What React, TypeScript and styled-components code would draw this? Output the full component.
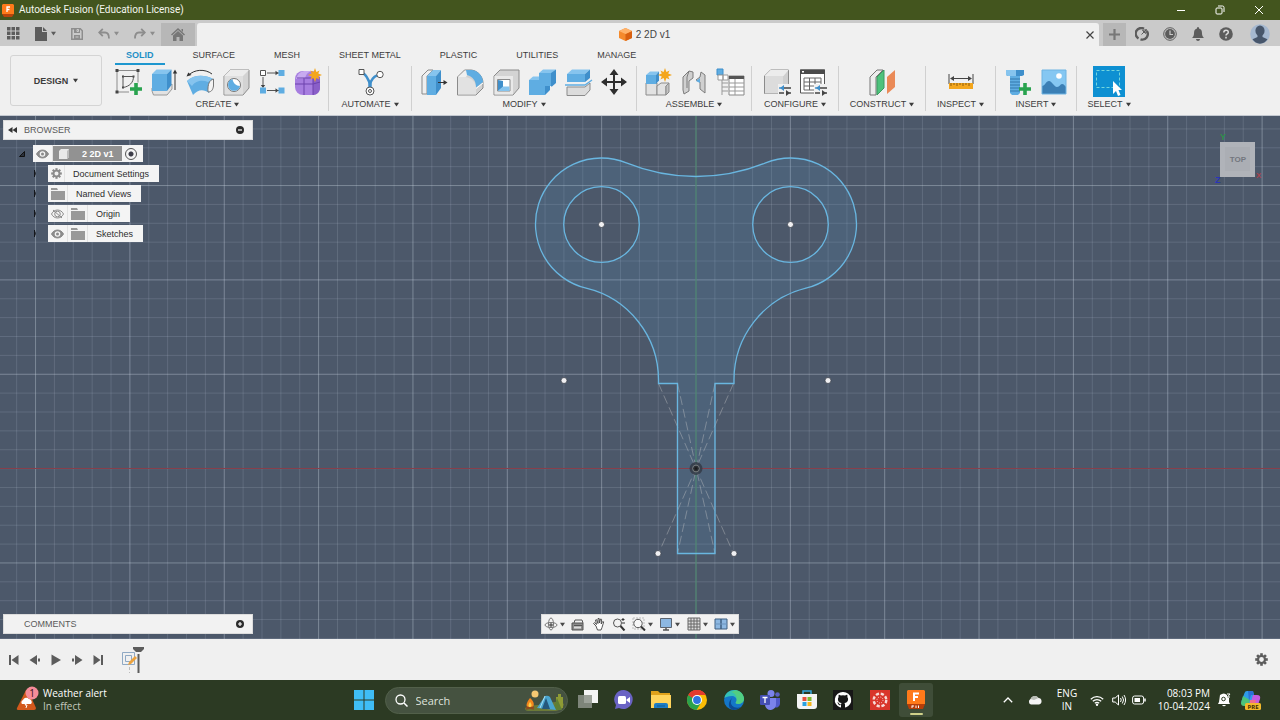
import React from "react";
import styled, { createGlobalStyle } from "styled-components";

const UI = '"Liberation Sans", Arial, sans-serif';
const SYS = '"Open Sans", "Noto Sans", sans-serif';

const Global = createGlobalStyle`
  *, *::before, *::after { box-sizing: border-box; }
  body { margin: 0; font-family: ${UI}; font-size: 9px; color: #3c3c3c; background: #f0f0f0; }
  button { font: inherit; color: inherit; border: 0; padding: 0; background: none; cursor: pointer; }
  svg { display: block; flex: none; }
`;

const Page = styled.div`
  display: flex;
  flex-direction: column;
  min-height: 100vh;
`;

/* ---------- window title bar ---------- */

const TitleBar = styled.header`
  display: flex;
  align-items: center;
  justify-content: space-between;
  height: 20px;
  padding: 0 2px;
  background: #43551e;
  color: #f4f6ee;
  font-family: Roboto, sans-serif;
`;

const TitleText = styled.div`
  display: flex;
  align-items: center;
  gap: 5px;
  font-size: 10px;
  line-height: 20px;
`;

const WindowButtons = styled.div`
  display: flex;
`;

const WindowButton = styled.button`
  display: flex;
  align-items: center;
  justify-content: center;
  width: 39px;
  height: 20px;
`;

/* ---------- document bar ---------- */

const DocBar = styled.div`
  display: flex;
  align-items: stretch;
  height: 26px;
  padding-top: 3px;
  background: #cacaca;
  color: #5c5c5c;
`;

const QuickTools = styled.div`
  display: flex;
  align-items: center;
  justify-content: space-between;
  width: 161px;
  padding: 0 6px 2px 7px;
`;

const QuickButton = styled.button<{ $dim?: boolean }>`
  display: flex;
  align-items: center;
  gap: 4px;
  height: 20px;
  color: ${(p) => (p.$dim ? "#8d8d8d" : "#5c5c5c")};
`;

const HomeTab = styled.button`
  display: flex;
  align-items: center;
  justify-content: center;
  width: 34px;
  margin-right: 2px;
  background: #b7b7b7;
  color: #777;
`;

const DocTab = styled.div`
  display: flex;
  flex: 1;
  align-items: center;
  padding: 0 3px 0 8px;
  border-radius: 3px 3px 0 0;
  background: #f0f0f0;
  color: #444;
`;

const DocName = styled.div`
  display: flex;
  flex: 1;
  align-items: center;
  justify-content: center;
  gap: 4px;
  font-size: 10px;
`;

const TabButton = styled.button`
  display: flex;
  align-items: center;
  justify-content: center;
  width: 12px;
  height: 18px;
`;

const NewTab = styled.button`
  display: flex;
  align-items: center;
  justify-content: center;
  width: 23px;
  margin-left: 4px;
  background: #b7b7b7;
  color: #777;
`;

const AccountTools = styled.div`
  display: flex;
  align-items: center;
  gap: 8px;
  padding: 0 10px 2px 6px;
`;

const RoundButton = styled.button<{ $apart?: boolean }>`
  display: flex;
  align-items: center;
  justify-content: center;
  width: 20px;
  height: 20px;
  margin-left: ${(p) => (p.$apart ? "6px" : "0")};
`;

/* ---------- ribbon ---------- */

const Ribbon = styled.div`
  display: flex;
  align-items: flex-start;
  height: 70px;
  padding-left: 10px;
  background: #f0f0f0;
  border-bottom: 1px solid #c3c8d0;
`;

const WorkspaceButton = styled.button`
  display: flex;
  align-items: center;
  justify-content: center;
  gap: 5px;
  width: 92px;
  height: 51px;
  margin: 9px 5px 0 0;
  border: 1px solid #d4d4d4;
  border-radius: 3px;
  font-weight: bold;
`;

const RibbonMain = styled.div`
  display: flex;
  flex-direction: column;
`;

const RibbonTabs = styled.nav`
  display: flex;
  gap: 17px;
  height: 20px;
  padding-left: 8px;
`;

const RibbonTab = styled.button<{ $active?: boolean }>`
  height: 19px;
  padding: 2px 11px 0;
  border-bottom: 2px solid ${(p) => (p.$active ? "#1e97cf" : "transparent")};
  color: ${(p) => (p.$active ? "#1e8fc6" : "#3c3c3c")};
  font-weight: ${(p) => (p.$active ? "bold" : "normal")};
  line-height: 15px;
`;

const Groups = styled.div`
  display: flex;
`;

const Group = styled.section<{ $width: number; $last: boolean }>`
  display: flex;
  flex-direction: column;
  align-items: center;
  width: ${(p) => p.$width}px;
  height: 45px;
  border-right: 1px solid ${(p) => (p.$last ? "transparent" : "#d0d0d0")};
`;

const ToolRow = styled.div`
  display: flex;
  height: 32px;
`;

const ToolButton = styled.button<{ $active?: boolean }>`
  display: flex;
  align-items: center;
  justify-content: center;
  width: ${(p) => (p.$active ? "32px" : "36px")};
  height: 31px;
  background: ${(p) => (p.$active ? "#0e90d2" : "transparent")};
`;

const GroupLabel = styled.button`
  display: flex;
  align-items: center;
  gap: 3px;
  height: 15px;
`;

/* ---------- canvas ---------- */

const Canvas = styled.main`
  position: relative;
  display: flex;
  flex: 1;
  flex-direction: column;
  justify-content: space-between;
  min-height: 400px;
  background: #4c586a;
  overflow: hidden;
`;

const Drawing = styled.svg`
  position: absolute;
  inset: 0;
  width: 100%;
  height: 100%;
`;

const CanvasTop = styled.div`
  position: relative;
  display: flex;
  justify-content: space-between;
  align-items: flex-start;
  padding: 4px 14px 0 3px;
`;

const CanvasBottom = styled.div`
  position: relative;
  display: grid;
  grid-template-columns: 1fr auto 1fr;
  padding: 0 3px 5px;
`;

const PanelBar = styled.div`
  display: flex;
  align-items: center;
  width: 250px;
  height: 20px;
  padding: 0 6px 0 4px;
  background: #f2f2f2;
  border: 1px solid #dcdcdc;
  color: #5a5a5a;
`;

const PanelTitle = styled.span`
  flex: 1;
  padding-left: 6px;
`;

const PanelLead = styled.span`
  width: 10px;
`;

const Tree = styled.ul`
  display: flex;
  flex-direction: column;
  gap: 3px;
  margin: 5px 0 0;
  padding: 0;
  list-style: none;
`;

const TreeRow = styled.li<{ $depth: number }>`
  display: flex;
  height: 17px;
  padding-left: ${(p) => 12 + p.$depth * 15}px;
  color: #2c2c2c;
`;

const Expander = styled.button`
  display: flex;
  align-items: center;
  width: 18px;
  padding-left: 4px;
`;

const RowBody = styled.div`
  display: flex;
  align-items: stretch;
  background: #f4f4f4;
`;

const RowCell = styled.span<{ $wide?: boolean }>`
  display: flex;
  align-items: center;
  justify-content: center;
  width: ${(p) => (p.$wide ? "20px" : "17px")};
  border-right: 1px solid #e2e2e2;
  color: #8b8b8b;
`;

const RowLabel = styled.span`
  display: flex;
  align-items: center;
  padding: 0 10px 0 8px;
`;

const RootLabel = styled.span`
  display: flex;
  align-items: center;
  gap: 12px;
  width: 69px;
  margin: 1px 0;
  padding-left: 5px;
  background: #929292;
  color: #fff;
  font-weight: bold;
`;

const ActiveRadio = styled.input`
  appearance: none;
  width: 12px;
  height: 12px;
  margin: auto 6px auto 3px;
  border: 1px solid #555;
  border-radius: 50%;
  background: radial-gradient(circle, #3c3c48 0 2px, #f4f4f4 3px);
`;

const NavBar = styled.div`
  display: flex;
  align-items: center;
  justify-content: space-between;
  width: 198px;
  height: 20px;
  padding: 0 3px 0 2px;
  background: #f2f2f2;
  border: 1px solid #dcdcdc;
`;

const NavButton = styled.button`
  display: flex;
  align-items: center;
  gap: 2px;
  color: #4a4a4a;
`;

/* ---------- timeline ---------- */

const Timeline = styled.div`
  display: flex;
  align-items: center;
  height: 41px;
  padding: 0 8px 0 3px;
  background: #f0f0f0;
  color: #5c5c5c;
`;

const Playback = styled.div`
  display: flex;
  margin-right: 12px;
`;

const PlayButton = styled.button`
  display: flex;
  align-items: center;
  justify-content: center;
  width: 21px;
  height: 20px;
`;

const TimelineTrack = styled.div`
  flex: 1;
`;

/* ---------- taskbar ---------- */

const Taskbar = styled.footer`
  display: grid;
  grid-template-columns: 1fr auto 1fr;
  align-items: center;
  height: 40px;
  background: #2c3a23;
  color: #fff;
  font-family: ${SYS};
  font-size: 10px;
`;

const Weather = styled.button`
  display: flex;
  align-items: center;
  justify-self: start;
  gap: 4px;
  padding-left: 16px;
  text-align: left;
  line-height: 13px;
`;

const WeatherDetail = styled.div`
  color: #c3c9bd;
`;

const TaskCenter = styled.div`
  display: flex;
  align-items: center;
`;

const SearchBox = styled.label`
  display: flex;
  align-items: center;
  gap: 8px;
  width: 183px;
  height: 27px;
  margin: 0 3px 0 4px;
  padding: 0 1px 0 9px;
  border: 1px solid #52604a;
  border-radius: 14px;
  background: #455240;
  overflow: hidden;
`;

const SearchInput = styled.input`
  flex: 1;
  min-width: 0;
  padding: 0;
  border: 0;
  outline: 0;
  background: none;
  color: #fff;
  font-family: ${SYS};
  font-size: 11px;
  &::placeholder { color: #dfe3dc; opacity: 1; }
`;

const AppList = styled.div`
  display: flex;
  justify-content: space-between;
  width: 363px;
`;

const AppButton = styled.button<{ $active?: boolean }>`
  display: flex;
  align-items: center;
  justify-content: center;
  width: 34px;
  height: 34px;
  border-radius: 3px;
  background: ${(p) => (p.$active ? "#3f4d38" : "transparent")};
`;

const Tray = styled.div`
  display: flex;
  align-items: center;
  justify-self: end;
  padding-right: 16px;
`;

const TrayButton = styled.button<{ $width: number }>`
  display: flex;
  align-items: center;
  justify-content: center;
  width: ${(p) => p.$width}px;
  height: 34px;
`;

const TrayText = styled.button<{ $width: number; $align: string }>`
  width: ${(p) => p.$width}px;
  text-align: ${(p) => p.$align};
  line-height: 13px;
`;

/* ---------- icons ---------- */

type IconProps = { w?: number; h?: number; box?: string; children: React.ReactNode };

const Icon = ({ w = 30, h = w, box, children }: IconProps) => (
  <svg width={w} height={h} viewBox={box ?? `0 0 ${w} ${h}`} fill="none" aria-hidden="true">
    {children}
  </svg>
);

const Caret = () => (
  <Icon w={5} h={5}>
    <path d="M0 .8h5L2.5 4.6z" fill="currentColor" />
  </Icon>
);

const BLUE = "#5fade2";
const SKY = "#86c4ee";
const DEEP = "#3f8fcb";
const EDGE = "#8b8b8b";

const GreenPlus = ({ x, y }: { x: number; y: number }) => (
  <path d={`M${x - 6} ${y}h12M${x} ${y - 6}v12`} stroke="#2aa34f" strokeWidth="3.6" />
);

const Star = ({ x, y }: { x: number; y: number }) => (
  <path
    transform={`translate(${x} ${y})`}
    d="M0-7 1.4-3 4.6-4.6 3.2-1.4 7 0 3.2 1.4 4.6 4.6 1.4 3 0 7-1.4 3-4.6 4.6-3.2 1.4-7 0-3.2-1.4-4.6-4.6-1.4-3z"
    fill="#f4a61c"
  />
);

const Adjust = ({ x, y }: { x: number; y: number }) => (
  <g transform={`translate(${x} ${y})`}>
    <rect x="-1" y="-4" width="14" height="12" fill="#f0f0f0" />
    <path d="M5 0h7M0 5h5" stroke="#444" strokeWidth="1.4" />
    <path d="M0 0h5" stroke={DEEP} strokeWidth="1.4" />
    <path d="M5-3v6L1 0z" fill={DEEP} />
    <path d="M7 2v6l4-3z" fill="#444" />
    <path d="M10 5h2" stroke="#444" strokeWidth="1.4" />
  </g>
);

const ribbonIcons: Record<string, React.ReactNode> = {
  "Create Sketch": (
    <>
      <path d="M4 3.500h21M4 3.500v21M25 3.500v12M4 25h12" stroke="#8c8c8c" />
      <path d="M2.500 2h3v3h-3zM23.500 2h3v3h-3zM2.500 23.500h3v3h-3zM9 8.500h2v2H9zM19.500 8.500h2v2h-2zM9 19.500h2v2H9z" fill="#444" />
      <path d="M10 20.500v-11h10.500c0 6-4 10-10.500 11z" stroke="#555" />
      <GreenPlus x={23} y={22} />
    </>
  ),
  Extrude: (
    <>
      <path d="M3 24v-3h15l5-4v5l-5 6H4.500z" fill="#e2e2e2" stroke="#999" />
      <path d="M3 7h15v17H3z" fill={BLUE} />
      <path d="M3 7l4.500-4.500h15L18 7z" fill={SKY} />
      <path d="M18 7l4.500-4.500V18L18 24z" fill={DEEP} />
      <path d="M26 23V5" stroke="#333" />
      <path d="M23.800 6.500 26 2.500l2.200 4z" fill="#333" />
    </>
  ),
  Revolve: (
    <>
      <path d="M4 8C9 2.500 20 1.500 27 7" stroke="#333" />
      <path d="M1.500 9.500l1.800-4L6.500 8z" fill="#333" />
      <path d="M2 14c6-6 17-7 26-2l-4 14c-5-4-11-4-16 2z" fill={BLUE} />
      <path d="M2 14c6-6 17-7 26-2l-5 3c-5-2-12-2-16 4z" fill={SKY} />
      <path d="M28.500 12c-4 1-6 5-5.500 13 4 0 5-3 5.500-6z" fill="#f4f4f4" stroke="#777" />
    </>
  ),
  Hole: (
    <>
      <path d="M3 9l6-6h19v18l-6 7H3z" fill="#d3d3d3" stroke={EDGE} strokeLinejoin="round" />
      <path d="M3 9l6-6h19l-6 6z" fill="#ececec" />
      <path d="M3.500 9H22v18.500H3.500z" fill="#dfdfdf" />
      <circle cx="13" cy="18" r="6.500" fill="#fff" stroke="#777" />
      <path d="M11.500 12a6 6 0 1 0 7.500 7c-4 0-7-3-7.500-7z" fill={BLUE} />
    </>
  ),
  "Rectangular Pattern": (
    <>
      <path d="M10 6h12M6 10v10M10 23.500h12" stroke="#555" />
      <path d="M18.500 3.800v4.400L21.500 6zM18.500 21.300v4.400l3-2.200zM3.800 18h4.400L6 21z" fill="#444" />
      <path d="M3.500 3.500h5v5h-5z" fill="#fff" stroke="#555" />
      <path d="M21.500 3h6v6h-6zM3 20.500h6v6H3zM21.500 20.500h6v6h-6z" fill={BLUE} />
    </>
  ),
  "Create Form": (
    <>
      <rect x="2" y="4" width="25" height="24" rx="8" fill="#a77ee0" />
      <path d="M3 12c2-6 5-8 10-8h6c-4 1-6 3-7 8z" fill="#c8abf0" />
      <path d="M20 12l7-2v11c0 4-3 7-7 7z" fill="#8a5fc8" />
      <path d="M2 17h18l7-2M11 11v17M4 11h16M20 11v17" stroke="#6c43ad" />
      <Star x={22} y={8} />
    </>
  ),
  Automate: (
    <>
      <path d="M7 6c5 1 6 8 8 10 2-2 2-7 9-8" stroke={DEEP} strokeWidth="2.600" />
      <path d="M15 14v8" stroke={DEEP} strokeWidth="3.500" />
      <path d="M4 2.500h5v5H4z" fill="#fff" stroke="#555" />
      <circle cx="25" cy="7.500" r="3.200" fill="#fff" stroke="#555" />
      <circle cx="15" cy="24" r="4" fill="#fff" stroke="#555" />
      <circle cx="15" cy="24" r="1.500" stroke="#555" />
    </>
  ),
  "Press Pull": (
    <>
      <path d="M3 9l6-6h5L8 9v18H3z" fill="#efefef" stroke={EDGE} />
      <path d="M8 9h9v19H8z" fill={BLUE} />
      <path d="M8 9l6-6h8l-5 6z" fill={SKY} />
      <path d="M17 9l5-6v18l-5 7z" fill={DEEP} />
      <path d="M19 15.500h7" stroke="#333" />
      <path d="M24.500 13v5l4-2.500z" fill="#333" />
    </>
  ),
  Fillet: (
    <>
      <path d="M2.500 10l7-7h7c7 1 11.500 7 11.500 13v5l-7 7H2.500z" fill="#d2d2d2" stroke={EDGE} />
      <path d="M3 10h7c7 1 11 5 11 11v6.500H3z" fill="#e2e2e2" />
      <path d="M3 10l7-6.500h5L11 10z" fill="#f0f0f0" />
      <path d="M11 3h6c7 1 11 7 11 12l-7 5.500c0-7-3-10.500-9-12.500z" fill={BLUE} />
      <path d="M21 21.500l7-5.500" stroke="#fff" />
    </>
  ),
  Shell: (
    <>
      <path d="M3 9l6-6h19v18l-6 7H3z" fill="#d3d3d3" stroke={EDGE} strokeLinejoin="round" />
      <path d="M3.500 9H22v18.500H3.500z" fill="#e9e9e9" />
      <path d="M6.500 12.500h12.500V24H6.500z" fill="#fff" stroke={EDGE} />
      <path d="M7 13l5 1v6l-5 4z" fill={DEEP} />
      <path d="M12 19.500h6.500V24H7z" fill={SKY} />
    </>
  ),
  Combine: (
    <>
      <path d="M2 13h10V6h12v13h-6v9H2z" fill={BLUE} />
      <path d="M2 13l4-3.500h6V13zM12 6l4-3.500h13L25 6z" fill={SKY} />
      <path d="M24 6l5-3.500V16l-4 3.500h-1zM18 28l5-5v-4h-5z" fill={DEEP} />
    </>
  ),
  "Split Body": (
    <>
      <path d="M4 20h18l5-4v7l-5 5.500H4z" fill="#dcdcdc" stroke={EDGE} />
      <path d="M4 7h18v8H4z" fill={BLUE} />
      <path d="M4 7l5-4.500h18L22 7z" fill={SKY} />
      <path d="M22 7l5-4.500V11l-5 4z" fill={DEEP} />
      <path d="M2 18h20l7-5" stroke={BLUE} strokeWidth="1.400" />
    </>
  ),
  Move: (
    <>
      <path d="M15 5v20M5 15h20" stroke="#2e2e2e" strokeWidth="2" />
      <path d="M15 2l4.500 6h-9zM15 28l-4.500-6h9zM2 15l6-4.500v9zM28 15l-6-4.500v9z" fill="#2e2e2e" />
    </>
  ),
  "New Component": (
    <>
      <path d="M3 16h11v12H3z" fill="#e2e2e2" stroke={EDGE} />
      <path d="M14 19l4-3h8l-3 3v9h-9z" fill="#e2e2e2" stroke={EDGE} />
      <path d="M23 19l3-3v9l-3 3z" fill="#c2c2c2" stroke={EDGE} />
      <path d="M3 8h10v9H3z" fill={BLUE} />
      <path d="M3 8l4-3.500h9L13 8z" fill={SKY} />
      <path d="M13 8l3-3.500v9L13 17z" fill={DEEP} />
      <Star x={22} y={8} />
    </>
  ),
  Joint: (
    <>
      <path d="M4 10l6-6 4 1v6l-4 3v10l-5 3-1-4z" fill="#d0d0d0" stroke="#7c7c7c" />
      <path d="M10 4l-2 6v11" stroke="#7c7c7c" />
      <path d="M17 13l4-3 1-5 4 3v18l-5-4v-7z" fill="#d0d0d0" stroke="#7c7c7c" />
      <path d="M17 14l4-3v5z" fill={BLUE} />
    </>
  ),
  "Parts List": (
    <>
      <path d="M2 2h6v6H2z" fill={BLUE} stroke={DEEP} />
      <path d="M7 13v15M7 16h6M7 20h6M7 24h6" stroke="#999" />
      <path d="M8 8h5v5H8zM3 8h5v5H3z" fill="#fff" stroke="#999" />
      <path d="M14 9h15v19H14z" fill="#fff" stroke="#888" />
      <path d="M14 9h15v3H14z" fill="#555" />
      <path d="M14 16h15M14 20h15M14 24h15M20 12v16" stroke="#999" />
    </>
  ),
  "Configure Design": (
    <>
      <path d="M2.500 9l6-6h18v18l-5 5.500h-19z" fill="#cfcfcf" stroke={EDGE} />
      <path d="M2.500 9l6-6h18l-5 6z" fill="#ececec" />
      <path d="M3 9h18v17.500H3z" fill="#dcdcdc" />
      <Adjust x={17} y={21} />
    </>
  ),
  "Configuration Table": (
    <>
      <path d="M2.500 3h24v23h-24z" fill="#fff" stroke="#555" />
      <path d="M2 2.500h25V7H2z" fill="#4b4b4b" />
      <path d="M4 4h2v1.500H4z" fill="#fff" />
      <path d="M6 11h17v12H6zM6 15h17M6 19h17M11.500 11v12M17 11v12" stroke="#666" />
      <Adjust x={17} y={21} />
    </>
  ),
  "Offset Plane": (
    <>
      <path d="M3 10l7-7h6L9 10v18H3z" fill="#ededed" stroke="#777" />
      <path d="M10 10l7-7v18l-7 7z" fill="#4ec27c" stroke="#3a9a60" />
      <path d="M20 10l8-7v17l-8 7z" fill="#ea8a57" />
    </>
  ),
  Measure: (
    <>
      <path d="M3 7v10M27 7v10M6 11.500h18" stroke="#444" />
      <path d="M8 9v5L4 11.500zM22 9v5l4-2.500z" fill="#444" />
      <path d="M3 16h24v6H3z" fill="#f4a61c" />
      <path d="M5 16v3M8 16v2M11 16v3M14 16v2M17 16v3M20 16v2M23 16v3" stroke="#8d5c08" />
    </>
  ),
  "Insert Fastener": (
    <>
      <path d="M7 9h10v17l-2 2H9l-2-2z" fill={BLUE} />
      <path d="M3 3h18v5l-2 1H5L3 8z" fill={DEEP} />
      <path d="M3 3h10v6H5L3 8z" fill={SKY} />
      <path d="M7 12h10M7 15h10M7 18h10M7 21h10M7 24h10" stroke="#3578ad" />
      <GreenPlus x={22} y={22} />
    </>
  ),
  Canvas: (
    <>
      <path d="M3 3h24v24H3z" fill="#85c7f2" />
      <path d="M3 19c3 0 4-5 7-5s5 6 8 6 3-3 5-3 3 2 4 3v7H3z" fill="#3b7fb5" />
      <circle cx="20" cy="9" r="2.800" fill="#fff" />
      <path d="M3 3h24v24H3z" stroke="#6fb4e2" />
    </>
  ),
  Select: (
    <>
      <path d="M2.500 3.500h23v17h-23z" stroke="#74d6dd" strokeDasharray="3 2" />
      <path d="M19 14v13l3-3 2 5 2.500-1-2-5H28z" fill="#fff" />
    </>
  ),
};

const groups = [
  { label: "CREATE", width: 222, tools: ["Create Sketch", "Extrude", "Revolve", "Hole", "Rectangular Pattern", "Create Form"] },
  { label: "AUTOMATE", width: 83, tools: ["Automate"] },
  { label: "MODIFY", width: 225, tools: ["Press Pull", "Fillet", "Shell", "Combine", "Split Body", "Move"] },
  { label: "ASSEMBLE", width: 115, tools: ["New Component", "Joint", "Parts List"] },
  { label: "CONFIGURE", width: 87, tools: ["Configure Design", "Configuration Table"] },
  { label: "CONSTRUCT", width: 87, tools: ["Offset Plane"] },
  { label: "INSPECT", width: 70, tools: ["Measure"] },
  { label: "INSERT", width: 81, tools: ["Insert Fastener", "Canvas"] },
  { label: "SELECT", width: 65, tools: ["Select"] },
];

const tabs = ["SOLID", "SURFACE", "MESH", "SHEET METAL", "PLASTIC", "UTILITIES", "MANAGE"];

const Gear = ({ size = 12 }: { size?: number }) => (
  <Icon w={size} box="-6 -6 12 12">
    {[0, 45, 90, 135].map((a) => (
      <path key={a} d="M0-5.800v11.600" stroke="currentColor" strokeWidth="2.400" transform={`rotate(${a})`} />
    ))}
    <circle r="3.200" stroke="currentColor" strokeWidth="2" fill="#f0f0f0" />
  </Icon>
);

const Eye = ({ off = false }: { off?: boolean }) => (
  <Icon w={13} h={10}>
    <path d="M.5 5C3-.3 10-.3 12.500 5 10 10.300 3 10.300.5 5z" stroke="currentColor" fill={off ? "none" : "currentColor"} />
    <circle cx="6.500" cy="5" r="2.800" fill={off ? "none" : "#f4f4f4"} stroke="currentColor" strokeWidth={off ? 1 : 0} />
    <circle cx="6.500" cy="5" r="1.500" fill={off ? "none" : "currentColor"} />
    {off && <path d="M2 1l9 8" stroke="currentColor" />}
  </Icon>
);

const Folder = () => (
  <Icon w={14} h={12}>
    <path d="M0 0h6l1 2H0zM0 3h14v9H0z" fill="#999" />
  </Icon>
);

/* ---------- sketch drawing ---------- */

const PITCH = 18.87;
const steps = Array.from({ length: 241 }, (_, i) => i - 120);

const profile =
  "M-69.600-305.100A184.600 184.600 0 0 0 69.600-305.100A66 66 0 1 1 109.900-179.800A94.400 94.400 0 0 0 38-87.500V-84.500H19V85.500H-18.500V-84.500H-37.500V-87.500A94.400 94.400 0 0 0-109.900-179.800A66 66 0 1 1-69.600-305.100Z";
const hole = (x: number) => `M${x - 37.8}-243.500a37.800 37.800 0 1 0 75.600 0a37.800 37.800 0 1 0-75.600 0Z`;

const SketchView = () => (
  <Drawing aria-label="Sketch of a winding key">
    <svg x="50%" overflow="visible">
      <g transform="translate(56 352)">
        {steps.map((i) => {
          const tone = i % 5 === 0 ? "rgba(205,215,230,.38)" : "rgba(200,212,228,.16)";
          return <path key={i} d={`M${i * PITCH}-2400V2400M-2400 ${i * PITCH + 0.6}H2400`} stroke={tone} />;
        })}
        <path d={profile + hole(-94.5) + hole(94.5)} fill="rgba(82,146,195,.17)" fillRule="evenodd" />
        <path d="M-2400 .5H2400" stroke="#873f4b" />
        <path d="M0-2400V2400" stroke="#3d7c5e" />
        <path d="M-37.500-84.500L37.500 85.500M37.500-84.500L-37.500 85.500M-18.500-84.500L19 85.500M19-84.500L-18.500 85.500" stroke="rgba(205,205,205,.38)" strokeDasharray="9 4" />
        <path d={profile + hole(-94.5) + hole(94.5)} fill="none" stroke="#69b6e0" strokeWidth="1.300" />
        <circle cx="0" cy=".5" r="6.500" fill="#343b46" opacity=".85" />
        <circle cx="0" cy=".5" r="3.400" fill="#2a2e34" stroke="#8c9292" strokeWidth=".8" />
        <circle cx="0" cy=".5" r="1.200" fill="#1b1b1b" />
        {[[-94.5, -243.5], [94.5, -243.5], [-132, -87.5], [132, -87.5], [-38, 85.5], [38, 85.5]].map(([x, y]) => (
          <circle key={`${x} ${y}`} cx={x} cy={y} r="3" fill="#f0f0f2" stroke="#3b414c" strokeWidth=".8" />
        ))}
      </g>
    </svg>
  </Drawing>
);

const ViewCube = () => (
  <svg width="54" height="68" viewBox="0 0 54 68" fontFamily='"Liberation Sans", sans-serif' fontWeight="bold" role="img" aria-label="View cube, top">
    <rect x="8" y="22" width="35" height="35" fill="#b0b3b9" />
    <rect x="13" y="27" width="25" height="24" fill="#abaeb4" />
    <text x="26" y="42" fontSize="8" fill="#73767e" textAnchor="middle">TOP</text>
    <text x="8" y="20" fontSize="9" fill="#2f8f4a">Y</text>
    <text x="3" y="63" fontSize="9" fill="#2a35b8">Z</text>
    <text x="44" y="58" fontSize="8" fill="#a8424c">X</text>
  </svg>
);

/* ---------- taskbar app pictures ---------- */

const apps: { name: string; icon: React.ReactNode; active?: boolean }[] = [
  { name: "Task view", icon: <><path d="M7 1h14v13H7z" fill="#f4f4f4" /><path d="M1 6h14v13H1z" fill="#8d938a" opacity=".85" /></> },
  { name: "Chat", icon: <><path d="M11 1a9.500 9.500 0 1 1-5 18l-4 1 1-4A9.500 9.500 0 0 1 11 1z" fill="#6a63c4" /><rect x="5" y="7" width="8" height="8" rx="1.500" fill="#fff" /><path d="M13.500 10.500l3.500-2.500v6l-3.500-2.500z" fill="#fff" /></> },
  { name: "File Explorer", icon: <><path d="M1 2h7l2 2h10v6H1z" fill="#e0a21b" /><path d="M1 6h20v13H1z" fill="#ffd45c" /><path d="M4 19v-3q0-2 2-2h10q2 0 2 2v3z" fill="#1d7cc4" /><path d="M7 17h8" stroke="#0d5a99" /></> },
  { name: "Chrome", icon: <><circle cx="11" cy="11" r="10" fill="#fbbc05" /><path d="M11 11L2.300 6A10 10 0 0 1 19.700 6H11z" fill="#e33b2e" /><path d="M11 11L2.300 6A10 10 0 0 0 10.500 21l5-8z" fill="#2ba24c" /><path d="M11 1a10 10 0 0 1 8.700 5H11a5 5 0 0 0-4.500 3L2.300 6A10 10 0 0 1 11 1z" fill="#e33b2e" /><circle cx="11" cy="11" r="5" fill="#fff" /><circle cx="11" cy="11" r="3.900" fill="#2f74e0" /></> },
  { name: "Edge", icon: <><circle cx="11" cy="11" r="10" fill="#1476c8" /><path d="M1.500 9C3-1 19-2 21 9c.5 4-3 6-6 6-2 0-3-1-2-2 2-3-1-6-4-6-4 0-6 1-7.500 2z" fill="#35c1b4" /><path d="M13 1.200c5 1 8 5 8 8.800 0 3-3 5-6 5-2 0-3-1-2-2 2-3 0-9-5-10z" fill="#5fd36c" opacity=".7" /><path d="M8 12c-1 5 4 8 10 6a10 10 0 0 1-8 3c-6-2-5-9 0-13-1 1-2 2-2 4z" fill="#0c4a94" /></> },
  { name: "Teams", icon: <><circle cx="12" cy="4.500" r="3.500" fill="#7b83eb" /><circle cx="18.500" cy="5.500" r="2.300" fill="#5b62c4" /><path d="M15 9h6v6a4 4 0 0 1-6 3z" fill="#5059c9" /><path d="M6 9h11v6a5 5 0 0 1-11 1z" fill="#7b83eb" /><rect x="1" y="6" width="10" height="10" rx="1" fill="#454fb5" /><path d="M3.500 8.500h5M6 8.500v5.500" stroke="#fff" strokeWidth="1.300" /></> },
  { name: "Microsoft Store", icon: <><path d="M7 6V2h8v4" stroke="#35a8e0" strokeWidth="1.500" /><path d="M1 5h20v12q0 3-3 3H4q-3 0-3-3z" fill="#f4f4f4" /><path d="M6.500 8h4v4h-4z" fill="#e74f3c" /><path d="M11.500 8h4v4h-4z" fill="#7dba2c" /><path d="M6.500 13h4v4h-4z" fill="#2ba1e0" /><path d="M11.500 13h4v4h-4z" fill="#f6b51c" /></> },
  { name: "GitHub", icon: <><path d="M1 1h20v20H1z" fill="#171717" /><path d="M11 3a8 8 0 0 0-2.700 15.600c.5.100.7-.2.700-.5v-2c-2 .4-2.500-.7-2.700-1.200-.3-.8-1-1-1-1.200.8-.4 1.500.3 1.900 1 .6.900 1.300.8 1.900.5 0-.5.300-.9.500-1.100-2-.2-3.700-1-3.700-4 0-.9.300-1.600.8-2.200-.1-.2-.4-1 .1-2.200 0 0 .8-.2 2.200.9a7 7 0 0 1 4 0c1.400-1.100 2.200-.9 2.200-.9.500 1.200.200 2 .1 2.200.5.600.8 1.300.8 2.200 0 3-1.700 3.800-3.700 4 .4.300.6.900.6 1.500v2.500c0 .3.200.6.700.5A8 8 0 0 0 11 3z" fill="#fff" /></> },
  { name: "Canvas LMS", icon: <><path d="M1 1h20v20H1z" fill="#d9362b" /><circle cx="11" cy="11" r="6.300" stroke="#f7dcd8" strokeWidth="2.400" strokeDasharray="3.200 1.750" /><circle cx="11" cy="11" r="3" stroke="#f7dcd8" strokeDasharray="1 1.350" /></> },
  { name: "Autodesk Fusion", active: true, icon: <><path d="M3 1h16l1 1v13H2V2z" fill="#ff7a1a" /><path d="M2 15h18l-2 5H4z" fill="#b63d08" /><path d="M9 12V4.500h5M9 8h4" stroke="#fff" strokeWidth="2" /><path d="M7 16.500v2.500M7 17h2M11 16.500v2.500M13.500 16.500v2.500" stroke="#fff" strokeWidth="1" /></> },
];

const rows = [
  { label: "Document Settings", icons: [<Gear key="g" size={11} />] },
  { label: "Named Views", wide: true, icons: [<Folder key="f" />] },
  { label: "Origin", wide: true, icons: [<Eye key="e" off />, <Folder key="f" />] },
  { label: "Sketches", wide: true, icons: [<Eye key="e" />, <Folder key="f" />] },
];

const navTools: { name: string; caret?: boolean; icon: React.ReactNode }[] = [
  { name: "Orbit", caret: true, icon: <><ellipse cx="7" cy="8" rx="6" ry="2.500" stroke="#777" /><ellipse cx="7" cy="7" rx="2.500" ry="6" stroke="#777" /><path d="M5 8h4M7 6v4" stroke="#333" /></> },
  { name: "Look At", icon: <><path d="M1 6h11v7H1z" fill="#8b8b8b" stroke="#555" /><path d="M3 6l1-3h7l1 3M3 8.500h8" stroke="#555" /><path d="M3 9.500h7v2H3z" fill="#dcdcdc" /></> },
  { name: "Pan", icon: <path d="M4 9L1.500 6.500l1-.8L4.500 7.500 3.500 3l1-.4L6 6.500 6 1.500h1.200L7.500 6l1-4 1.100.3L9.200 7l1.500-2.500 1 .4L10 10.500 9 13H5.500z" fill="#fff" stroke="#444" strokeWidth=".9" strokeLinejoin="round" /> },
  { name: "Zoom", icon: <><circle cx="5.500" cy="6" r="4" stroke="#555" /><path d="M8.500 9l4 4.500" stroke="#333" strokeWidth="2" /><path d="M9.500 2.500h3M11 1v3M10 6h3" stroke="#333" /></> },
  { name: "Fit", caret: true, icon: <><path d="M1 1h11v11H1z" stroke="#bbb" strokeDasharray="2 1" /><circle cx="6" cy="6.500" r="4.200" fill="#f7f7f7" stroke="#555" /><path d="M9 9.500l4 4" stroke="#333" strokeWidth="2" /></> },
  { name: "Display Settings", caret: true, icon: <><path d="M1.500 1.500h11v9h-11z" fill="#8db8e2" stroke="#5c6570" /><path d="M4 13h6M7 11v2" stroke="#555" strokeWidth="1.500" /></> },
  { name: "Grid and Snaps", caret: true, icon: <><path d="M1 1h12v12H1z" fill="#dedede" stroke="#666" /><path d="M4 1v12M7 1v12M10 1v12M1 4h12M1 7h12M1 10h12" stroke="#666" /></> },
  { name: "Viewports", caret: true, icon: <><path d="M1 2h12v10H1z" fill="#8db8e2" stroke="#3f5f80" /><path d="M7 2v10" stroke="#3f5f80" strokeWidth="1.500" /><path d="M1 7h12" stroke="#6a93bd" /></> },
];

const playback: [string, string][] = [
  ["Go to start", "M1 1h2v10H1zM10.500 1v10L3.500 6z"],
  ["Step back", "M8 1v10L.5 6zM9 4.500h2v3H9z"],
  ["Play", "M1.500 .5v11L11 6z"],
  ["Step forward", "M4 1v10l7.500-5zM1 4.500h2v3H1z"],
  ["Go to end", "M9 1h2v10H9zM1.500 1v10l7-5z"],
];

export default function App() {
  return (
    <Page>
      <Global />
      <TitleBar>
        <TitleText>
          <Icon w={12} h={13}>
            <path d="M1 0h10l1 1v9H0V1z" fill="#ff7a1a" />
            <path d="M0 10h12l-2 3H2z" fill="#b8440c" />
            <path d="M5 8V3h3M5 5.500h2.500" stroke="#fff" strokeWidth="1.300" />
          </Icon>
          Autodesk Fusion (Education License)
        </TitleText>
        <WindowButtons>
          <WindowButton aria-label="Minimize"><Icon w={10}><path d="M1 5.500h8" stroke="#fff" /></Icon></WindowButton>
          <WindowButton aria-label="Restore"><Icon w={10}><rect x="1" y="3" width="6" height="6" rx="1" stroke="#fff" /><path d="M3 1h4.500Q9 1 9 2.500V7" stroke="#fff" /></Icon></WindowButton>
          <WindowButton aria-label="Close"><Icon w={10}><path d="M1 1l8 8M9 1L1 9" stroke="#fff" /></Icon></WindowButton>
        </WindowButtons>
      </TitleBar>

      <DocBar>
        <QuickTools>
          <QuickButton aria-label="Data panel">
            <Icon w={13}><path d="M0 0h3.500v3.500H0zM4.500 0H8v3.500H4.500zM9 0h3.500v3.500H9zM0 4.500h3.500V8H0zM4.500 4.500H8V8H4.500zM9 4.500h3.500V8H9zM0 9h3.500v3.500H0zM4.500 9H8v3.500H4.500zM9 9h3.500v3.500H9z" fill="currentColor" /></Icon>
          </QuickButton>
          <QuickButton aria-label="File">
            <Icon w={12} h={14}><path d="M0 0h7v5h5v9H0zM8 0l4 4H8z" fill="currentColor" /></Icon>
            <Caret />
          </QuickButton>
          <QuickButton $dim aria-label="Save">
            <Icon w={12}><path d="M.8.8h8.500l2 2v8.500H.8z" stroke="currentColor" strokeWidth="1.500" /><path d="M3 1h6v4H3zM3 7h6v5H3z" fill="currentColor" /><path d="M6 1.500h1.500v2H6zM4.500 9h3" stroke="#cacaca" /></Icon>
          </QuickButton>
          <QuickButton $dim aria-label="Undo">
            <Icon w={12}><path d="M1.500 4.500H7c3 0 4 2 4 6" stroke="currentColor" strokeWidth="1.800" /><path d="M4.800.8L1.200 4.500l3.600 3.700" stroke="currentColor" strokeWidth="1.800" /></Icon>
            <Caret />
          </QuickButton>
          <QuickButton $dim aria-label="Redo">
            <Icon w={12}><path d="M10.500 4.500H5c-3 0-4 2-4 6" stroke="currentColor" strokeWidth="1.800" /><path d="M7.200.8l3.600 3.700-3.600 3.700" stroke="currentColor" strokeWidth="1.800" /></Icon>
            <Caret />
          </QuickButton>
        </QuickTools>
        <HomeTab aria-label="Home">
          <Icon w={14} h={13}><path d="M7 0l7 6.500-1 1L7 2 1 7.500l-1-1zM10.500 1H12v3l-1.500-1.500zM2 7.500L7 3l5 4.500V13H8.500V9h-3v4H2z" fill="currentColor" /></Icon>
        </HomeTab>
        <DocTab>
          <DocName>
            <Icon w={13}><path d="M6.500 0L13 3v7l-6.500 3L0 10V3z" fill="#f58a2c" /><path d="M6.500 6L13 3v7l-6.500 3z" fill="#d9600f" /><path d="M6.500 0L13 3 6.500 6 0 3z" fill="#ffb36b" /></Icon>
            2 2D v1
          </DocName>
          <TabButton aria-label="Close document"><Icon w={8}><path d="M.5.5l7 7M7.500.5l-7 7" stroke="currentColor" strokeWidth="1.200" /></Icon></TabButton>
        </DocTab>
        <NewTab aria-label="New tab"><Icon w={11}><path d="M5.500 0v11M0 5.500h11" stroke="currentColor" strokeWidth="2.200" /></Icon></NewTab>
        <AccountTools>
          <RoundButton aria-label="Extensions"><Icon w={14}><path d="M3.500 11.500A5.500 5.500 0 0 1 9 1.800M11.800 4A5.500 5.500 0 0 1 5.500 12.300" stroke="currentColor" strokeWidth="2.400" /><path d="M6.500 7.500L11 3M7.500 3.500l4-1-1 4z" stroke="currentColor" /></Icon></RoundButton>
          <RoundButton aria-label="Job status"><Icon w={14}><circle cx="7" cy="7" r="6.300" stroke="currentColor" /><circle cx="7" cy="7" r="4.900" fill="currentColor" /><path d="M7 3.500V7.500h3" stroke="#cacaca" strokeWidth="1.200" /></Icon></RoundButton>
          <RoundButton aria-label="Notifications"><Icon w={12} h={14}><path d="M6 0c1 0 1 1 1 1.500 2.500.5 3 2.500 3 5s1 3.500 2 4.500H0c1-1 2-2 2-4.500s.5-4.500 3-5C5 1 5 0 6 0zM4 12h4c0 2.500-4 2.500-4 0z" fill="currentColor" /></Icon></RoundButton>
          <RoundButton aria-label="Help"><Icon w={14}><circle cx="7" cy="7" r="6.800" fill="currentColor" /><path d="M4.800 5.500c0-3.200 4.500-3 4.500-.3C9.300 7 7 6.800 7 8.500M7 9.800v1.600" stroke="#dedede" strokeWidth="1.500" /></Icon></RoundButton>
          <RoundButton $apart aria-label="Account"><Icon w={20}><circle cx="10" cy="10" r="9.800" fill="#a5b8d0" /><ellipse cx="10" cy="6.800" rx="4.600" ry="5.400" fill="#47566b" /><path d="M7.500 11h5v2l5 2.300A10 10 0 0 1 10 19.800 10 10 0 0 1 2.500 15.300l5-2.300z" fill="#47566b" /></Icon></RoundButton>
        </AccountTools>
      </DocBar>

      <Ribbon>
        <WorkspaceButton>DESIGN <Caret /></WorkspaceButton>
        <RibbonMain>
          <RibbonTabs>
            {tabs.map((t, i) => <RibbonTab key={t} $active={i === 0}>{t}</RibbonTab>)}
          </RibbonTabs>
          <Groups>
            {groups.map((g, i) => (
              <Group key={g.label} $width={g.width} $last={i === groups.length - 1}>
                <ToolRow>
                  {g.tools.map((t) => (
                    <ToolButton key={t} $active={t === "Select"} aria-label={t}>
                      <Icon w={30}>{ribbonIcons[t]}</Icon>
                    </ToolButton>
                  ))}
                </ToolRow>
                <GroupLabel>{g.label}<Caret /></GroupLabel>
              </Group>
            ))}
          </Groups>
        </RibbonMain>
      </Ribbon>

      <Canvas>
        <SketchView />
        <CanvasTop>
          <div>
            <PanelBar>
              <PanelLead><Icon w={9} h={6}><path d="M4.500 0v6L0 3zM9 0v6L4.500 3z" fill="#333" /></Icon></PanelLead>
              <PanelTitle>BROWSER</PanelTitle>
              <TabButton aria-label="Collapse browser"><Icon w={8}><circle cx="4" cy="4" r="4" fill="#2c2c2c" /><path d="M2 4h4" stroke="#fff" strokeWidth="1.200" /></Icon></TabButton>
            </PanelBar>
            <Tree>
              <TreeRow $depth={0}>
                <Expander aria-label="Collapse 2 2D v1"><Icon w={6}><path d="M5.500.5v5H.5z" stroke="#111" fill="#2b313b" /></Icon></Expander>
                <RowBody>
                  <RowCell $wide><Eye /></RowCell>
                  <RootLabel>
                    <Icon w={12}><path d="M1 3l2-2h8v8l-2 2H1z" fill="#e9e9e9" /><path d="M9 3l2-2v8l-2 2z" fill="#bdbdbd" /></Icon>
                    2 2D v1
                  </RootLabel>
                  <ActiveRadio type="radio" name="active" aria-label="Activate component" defaultChecked />
                </RowBody>
              </TreeRow>
              {rows.map((r) => (
                <TreeRow key={r.label} $depth={1}>
                  <Expander aria-label={`Expand ${r.label}`}><Icon w={3} h={7}><path d="M.5 0v7M.5 1l1 2.500L.5 6" stroke="#14171c" /></Icon></Expander>
                  <RowBody>
                    {r.icons.map((icon, i) => <RowCell key={i} $wide={r.wide}>{icon}</RowCell>)}
                    <RowLabel>{r.label}</RowLabel>
                  </RowBody>
                </TreeRow>
              ))}
            </Tree>
          </div>
          <ViewCube />
        </CanvasTop>
        <CanvasBottom>
          <PanelBar>
            <PanelLead />
            <PanelTitle>COMMENTS</PanelTitle>
            <TabButton aria-label="Add comment"><Icon w={8}><circle cx="4" cy="4" r="4" fill="#2c2c2c" /><path d="M2 4h4M4 2v4" stroke="#fff" strokeWidth="1.200" /></Icon></TabButton>
          </PanelBar>
          <NavBar>
            {navTools.map((t) => (
              <NavButton key={t.name} aria-label={t.name}>
                <Icon w={14}>{t.icon}</Icon>
                {t.caret && <Caret />}
              </NavButton>
            ))}
          </NavBar>
        </CanvasBottom>
      </Canvas>

      <Timeline>
        <Playback>
          {playback.map(([name, d]) => (
            <PlayButton key={name} aria-label={name}><Icon w={12}><path d={d} fill="currentColor" /></Icon></PlayButton>
          ))}
        </Playback>
        <TimelineTrack>
          <Icon w={24} h={28}>
            <path d="M2.500 6.500h12v12h-12zM5.500 9.500h6v6h-6z" stroke="#8fa9c4" />
            <path d="M8 19l1-3 6-6 2 2-6 6z" fill="#eba23f" />
            <path d="M9.500 21v6" stroke="#bbb" strokeDasharray="3 2" />
            <path d="M13 1h11v2l-3 3h-5l-3-3z" fill="#5c5c5c" />
            <path d="M18.500 8v19" stroke="#5c5c5c" strokeWidth="2" />
          </Icon>
        </TimelineTrack>
        <PlayButton aria-label="Timeline settings"><Gear size={13} /></PlayButton>
      </Timeline>

      <Taskbar>
        <Weather>
          <Icon w={23} h={30}>
            <path d="M10 5q1-1 2 0l8 18q0 2-2 2H3q-3 0-2-2z" fill="#d3591c" />
            <path d="M6 19a2.500 2.500 0 0 1 1-4 3.500 3.500 0 0 1 6-1 3 3 0 0 1 2 5z" fill="#fff" />
            <path d="M11 17l-2 3h2l-1 3" stroke="#fff" />
            <circle cx="16" cy="8" r="6.500" fill="#f58c98" />
            <text x="16" y="11.500" fontSize="10" textAnchor="middle" fill="#3a1014">1</text>
          </Icon>
          <div>
            Weather alert
            <WeatherDetail>In effect</WeatherDetail>
          </div>
        </Weather>
        <TaskCenter>
          <AppButton aria-label="Start">
            <Icon w={20}><path d="M0 0h9.500v9.500H0zM10.500 0H20v9.500h-9.500zM0 10.500h9.500V20H0zM10.500 10.500H20V20h-9.500z" fill="#3fbdf5" /></Icon>
          </AppButton>
          <SearchBox>
            <Icon w={13}><circle cx="5.500" cy="5.500" r="4.500" stroke="#fff" strokeWidth="1.300" /><path d="M9 9l3.500 3.500" stroke="#fff" strokeWidth="1.500" /></Icon>
            <SearchInput placeholder="Search" aria-label="Search" />
            <Icon w={43} h={24}>
              <path d="M2 20c6-4 14-2 20-4s14-3 19 0c-1 5-5 7-10 7H5c-2 0-3-1-3-3z" fill="#6c7a38" />
              <path d="M33 22V9h2V6h3v3h2v11z" fill="#8e9b35" />
              <path d="M30 22l4-12 5 12z" fill="#5f7e33" />
              <path d="M14 20l8-12q3-1 5 1l6 13z" fill="#4aa5cf" />
              <path d="M19 21l4-11 4 11z" fill="#24587c" />
              <path d="M22 8l-5 12" stroke="#a9dff2" />
              <circle cx="12" cy="6" r="3.500" fill="#f4c873" />
              <path d="M7 10c4 3 6 9 0 10-6-1-3-6 0-10z" fill="#f4861c" />
              <path d="M7 14c2 2 2 5 0 5s-2-2 0-5z" fill="#ffd34d" />
              <path d="M3 21l8-2M3 19l8 2" stroke="#8c4b20" strokeWidth="1.500" />
            </Icon>
          </SearchBox>
          <AppList>
            {apps.map((a) => (
              <AppButton key={a.name} $active={a.active} aria-label={a.name}>
                <Icon w={22} h={a.active ? 34 : 22} box={a.active ? "0 -6 22 34" : undefined}>
                  {a.icon}
                  {a.active && <rect x="5" y="24" width="13" height="2" rx="1" fill="#cfd18a" />}
                </Icon>
              </AppButton>
            ))}
          </AppList>
        </TaskCenter>
        <Tray>
          <TrayButton $width={24} aria-label="Hidden icons"><Icon w={10} h={6}><path d="M.8 5.200L5 1l4.200 4.200" stroke="#fff" strokeWidth="1.300" /></Icon></TrayButton>
          <TrayButton $width={30} aria-label="OneDrive"><Icon w={14} h={10}><path d="M3 9.500a3 3 0 0 1-.5-5.500A4.500 4.500 0 0 1 10.500 3a3.300 3.300 0 0 1 .5 6.500z" fill="#f4f4f4" /><path d="M2.500 4A4.500 4.500 0 0 1 10.500 3L6 5z" fill="#b9bdb6" /></Icon></TrayButton>
          <TrayText $width={34} $align="center">ENG<br />IN</TrayText>
          <TrayButton $width={26} aria-label="Wi-Fi"><Icon w={14} h={11}><path d="M.8 4.200a9 9 0 0 1 12.400 0M2.800 6.300a6 6 0 0 1 8.400 0M4.800 8.300a3.200 3.200 0 0 1 4.400 0" stroke="#fff" strokeWidth="1.200" /><circle cx="7" cy="9.800" r="1.200" fill="#fff" /></Icon></TrayButton>
          <TrayButton $width={18} aria-label="Volume"><Icon w={14} h={12}><path d="M.7 4h2.500L6.500 1v10L3.200 8H.7z" stroke="#fff" /><path d="M8.500 4q1.500 2 0 4M10.300 2.500q2.500 3.500 0 7M12 1q3.200 5 0 10" stroke="#fff" /></Icon></TrayButton>
          <TrayButton $width={22} aria-label="Battery"><Icon w={14} h={10}><rect x=".6" y="1" width="11" height="8" rx="2" stroke="#fff" /><path d="M2.500 3h5.500v4H2.500z" fill="#fff" /><path d="M13 3.500v3" stroke="#fff" strokeWidth="1.500" /></Icon></TrayButton>
          <TrayText $width={60} $align="right">08:03 PM<br />10-04-2024</TrayText>
          <TrayButton $width={28} aria-label="Notifications"><Icon w={13} h={14}><path d="M2 2q4-3 7 0v2l2 1v4l1 2H0l1-2z" fill="#fff" /><path d="M4 12h4q-2 2.500-4 0z" fill="#fff" /><path d="M9 1h3L9.500 4H12" stroke="#fff" /><circle cx="5.500" cy="6" r="1.800" stroke="#2c3a23" /></Icon></TrayButton>
          <TrayButton $width={26} aria-label="Copilot">
            <Icon w={22}>
              <path d="M7 2h6l1 4-3 9H3q-2 0-1.500-3l3-8Q5 2 7 2z" fill="#2f9be8" />
              <path d="M3 7l-2 7q0 3 3 3h4l2-6z" fill="#4cc37a" />
              <path d="M13 6h4q4 0 3 4l-2 6h-8z" fill="#c45be0" />
              <path d="M10 11h6l-2 8H9z" fill="#ef6d8c" />
              <path d="M8 2h5l1 4h-3l-2 6z" fill="#2c6fd6" />
              <rect x="5" y="14" width="16" height="7" rx="1.500" fill="#f4b92c" />
              <text x="13" y="20" fontSize="6" fontWeight="bold" textAnchor="middle" fill="#3a2c05">PRE</text>
            </Icon>
          </TrayButton>
        </Tray>
      </Taskbar>
    </Page>
  );
}
